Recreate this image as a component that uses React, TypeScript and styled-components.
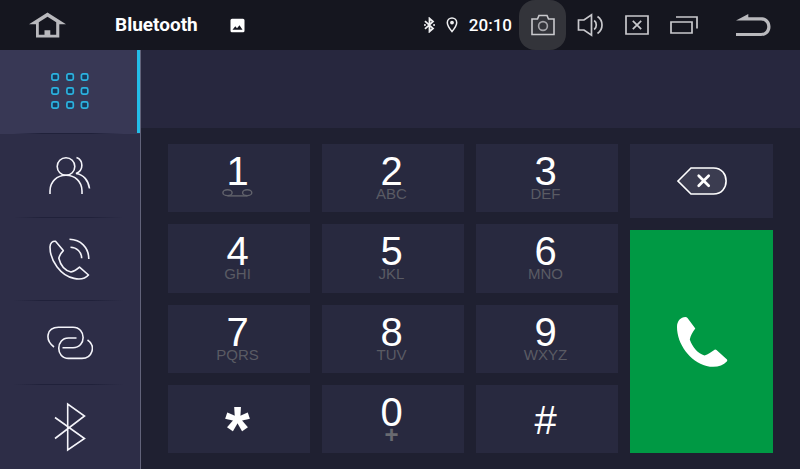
import React from "react";
import styled, { createGlobalStyle, css } from "styled-components";

const GlobalStyle = createGlobalStyle`
  * { box-sizing: border-box; }
  body { margin: 0; background: #1f2031; font-family: "Liberation Sans", Arial, sans-serif; color: #fff; }
  button { margin: 0; padding: 0; border: 0; background: none; color: inherit; font: inherit; cursor: pointer; }
  svg { display: block; flex: none; }
`;

const Screen = styled.div`
  display: flex;
  flex-direction: column;
  min-height: 100vh;
`;

const StatusBar = styled.header`
  display: flex;
  align-items: center;
  height: 50px;
  padding: 0 23px 0 24px;
  background: #15161f;
  font-family: Roboto, sans-serif;
`;

const BarButton = styled.button<{ $active?: boolean }>`
  display: flex;
  align-items: center;
  justify-content: center;
  width: 47px;
  height: 50px;
  border-radius: 16px;
  background: ${(p) => (p.$active ? "#33343a" : "transparent")};
`;

const Title = styled.h1`
  margin: 0 32px 0 44px;
  font-size: 19px;
  line-height: 24px;
  font-weight: 700;
`;

const Status = styled.div`
  display: flex;
  align-items: center;
  gap: 11px;
  margin-left: auto;
  margin-right: 7px;
`;

const Clock = styled.time`
  font-size: 17px;
  line-height: 24px;
  font-weight: 500;
`;

const NavButtons = styled.nav`
  display: flex;
  margin-right: 23px;
`;

const Body = styled.div`
  display: flex;
  flex: 1;
`;

const Sidebar = styled.nav`
  display: grid;
  grid-template-rows: repeat(5, minmax(80px, 1fr));
  width: 141px;
  background: #2d2d47;
  border-right: 1px solid #62637a;
`;

const Tab = styled.button<{ $active?: boolean }>`
  display: flex;
  align-items: center;
  justify-content: center;
  border-bottom: 1px solid transparent;
  border-image: linear-gradient(90deg, transparent 10%, #20213a 30%, #20213a 65%, transparent 88%) 1;
  &:last-child { border-image: none; }
  ${(p) =>
    p.$active &&
    css`
      background: #383855;
      box-shadow: inset -3px 0 #23bde8;
    `}
`;

const Main = styled.main`
  display: flex;
  flex: 1;
  flex-direction: column;
`;

const NumberField = styled.input`
  width: 100%;
  height: 78px;
  padding: 0 27px;
  border: 0;
  outline: 0;
  background: #27273e;
  color: #fff;
  font: 36px "Liberation Sans", Arial, sans-serif;
`;

const Dialer = styled.div`
  display: grid;
  flex: 1;
  grid-template-columns: 450fr 143fr;
  gap: 12px;
  padding: 16px 27px;
`;

const Keypad = styled.div`
  display: grid;
  grid-template-columns: repeat(3, 1fr);
  grid-template-rows: repeat(4, minmax(64px, 1fr));
  gap: 12px;
`;

const Key = styled.button`
  display: flex;
  flex-direction: column;
  align-items: center;
  padding: 11px 3px 0 0;
  background: #28293f;
`;

const Digit = styled.span`
  font-size: 40px;
  line-height: 32px;
`;

const Letters = styled.span<{ $plus?: boolean }>`
  display: flex;
  align-items: center;
  height: 14px;
  font-size: ${(p) => (p.$plus ? 24 : 15)}px;
  font-weight: ${(p) => (p.$plus ? 700 : 400)};
  line-height: 14px;
  color: ${(p) => (p.$plus ? "#696a70" : "#5a5b64")};
`;

const Sign = styled.span<{ $star?: boolean }>`
  height: 48px;
  font-size: ${(p) => (p.$star ? 64 : 40)}px;
  font-weight: ${(p) => (p.$star ? 700 : 400)};
  line-height: ${(p) => (p.$star ? 68 : 48)}px;
`;

const Actions = styled.div`
  display: flex;
  flex-direction: column;
  gap: 12px;
`;

const Action = styled.button<{ $call?: boolean }>`
  display: flex;
  align-items: center;
  justify-content: center;
  flex: ${(p) => (p.$call ? "1" : "0 0 74px")};
  background: ${(p) => (p.$call ? "#009944" : "#28293f")};
`;

const keys = [
  ["1", "voicemail"], ["2", "ABC"], ["3", "DEF"],
  ["4", "GHI"], ["5", "JKL"], ["6", "MNO"],
  ["7", "PQRS"], ["8", "TUV"], ["9", "WXYZ"],
  ["*", ""], ["0", "+"], ["#", ""],
];

const Voicemail = () => (
  <svg width="31" height="10" viewBox="0 0 31 10" fill="none" stroke="#62636c" strokeWidth="1.4">
    <ellipse cx="5.5" cy="3.7" rx="4.6" ry="2.9" />
    <ellipse cx="25.2" cy="3.7" rx="4.6" ry="2.9" />
    <path d="M5.5 6.9h20" />
  </svg>
);

const line = { fill: "none", stroke: "#f4f4fa", strokeWidth: 1.6 };

const tabs = [
  {
    name: "Keypad",
    icon: (
      <svg width="38" height="36" viewBox="0 0 38 36" fill="#173a5c" stroke="#2cb2df" strokeWidth="1.7">
        {[0.9, 14.9, 28.9].map((y) =>
          [0.9, 15.9, 30.4].map((x) => <rect key={`${x}-${y}`} x={x} y={y} width="6.4" height="6.2" rx="1.6" />),
        )}
      </svg>
    ),
  },
  {
    name: "Contacts",
    icon: (
      <svg width="42" height="39" viewBox="0 0 42 39" {...line}>
        <circle cx="17" cy="10.5" r="8.8" />
        <path d="M1 38v-3C1 25.500 8 19.300 17 19.300S33 25.500 33 35v3M27.500 1.500C34.500 4 35 14.500 27 17.500 34.500 18.500 39.500 24.500 40.500 32.500" />
      </svg>
    ),
  },
  {
    name: "Call history",
    icon: (
      <svg width="42" height="42" viewBox="0 0 42 42" {...line}>
        <path strokeLinejoin="round" d="M1 9C1 5 3.500 3 6.500 3.300L14.300 12.600C12 15 10.500 17.500 9.800 20.200 11.500 27 16 32.500 22 34 25 33.500 27.800 31.500 30.500 29.200L39.500 37C36.500 40.500 31 41.600 25 40.400 12 38 1 23 1 9Z" />
        <path d="M20.500 1.300C31.500 1.500 39.700 9.500 39.800 21M21.500 9.300C28 9.500 32.500 14 32.700 20.200" />
      </svg>
    ),
  },
  {
    name: "Pair device",
    icon: (
      <svg width="46" height="34" viewBox="0 0 46 34" {...line}>
        <path d="M7 21C-2.500 14-.5 1.300 11.500 1.300H26C39.500 1.300 39.500 21.700 26 21.700H15.500" />
        <path d="M29.500 12H21.500C8.500 12 8.500 32.400 21.500 32.400H35C45 32.400 49.500 20 40.500 14" />
      </svg>
    ),
  },
  {
    name: "Bluetooth settings",
    icon: (
      <svg width="32" height="50" viewBox="0 0 32 50" {...line}>
        <path d="M1 15.500 30.500 36.500 13.700 48V2L30.500 14 1 36.500" />
      </svg>
    ),
  },
];

export default function App() {
  return (
    <Screen>
      <GlobalStyle />
      <StatusBar>
        <BarButton aria-label="Home">
          <svg width="37" height="26" viewBox="0 0 37 26" fill="#b9b9bd">
            <path fillRule="evenodd" d="M18.500.5 37 12.200H30.300V25.500H7V12.200H0ZM18.500 4.700 9.800 10.200V22.800H15.500V18.300H21.300V22.800H27.200V10.200Z" />
          </svg>
        </BarButton>
        <Title>Bluetooth</Title>
        <svg width="15" height="15" viewBox="0 0 15 15" fill="#fff" aria-hidden="true">
          <path fillRule="evenodd" d="M2 .7H13Q14.500.7 14.500 2.200V12.800Q14.500 14.300 13 14.300H2Q.5 14.300.5 12.800V2.200Q.5.7 2 .7ZM2.500 11.800H12.500L9.500 7.300 7 10.200 5.300 8.200Z" />
        </svg>
        <Status>
          <svg width="11" height="16" viewBox="0 0 11 16" fill="none" stroke="#f0f0f2" strokeWidth="1.800" aria-hidden="true">
            <path d="M1 4.200 9 11.400 5.500 14.500V1.500L9 4.600 1 11.800" />
            <path d="M.2 8h1.500M9.300 8h1.500" />
          </svg>
          <svg width="12" height="16" viewBox="0 0 12 16" fill="none" stroke="#f0f0f2" strokeWidth="1.500" aria-hidden="true">
            <path d="M6 14.500C3.500 11.500 1.300 8.500 1.300 5.700A4.700 4.700 0 0 1 10.700 5.700C10.700 8.500 8.500 11.500 6 14.500Z" />
            <circle cx="6" cy="5.600" r="1.900" fill="#f0f0f2" stroke="none" />
          </svg>
          <Clock>20:10</Clock>
        </Status>
        <NavButtons>
          <BarButton $active aria-label="Screenshot">
            <svg width="24" height="22" viewBox="0 0 24 22" fill="none" stroke="#c9c9cd" strokeWidth="1.600">
              <path d="M1 5H6.500L8 1.500H16L17.500 5H23V20.500H1Z" />
              <circle cx="12" cy="12" r="4.400" stroke="#a5a5aa" />
            </svg>
          </BarButton>
          <BarButton aria-label="Volume">
            <svg width="26" height="24" viewBox="0 0 26 24" fill="none" stroke="#c9c9cd" strokeWidth="1.700">
              <path d="M1.500 7H7L14.500 1.800V22.200L7 17H1.500Z" />
              <path d="M17.200 7.500C20 9.500 20 14.500 17.200 16.500M20.500 3.500C26.500 7.500 26.500 16.500 20.500 20.500" />
            </svg>
          </BarButton>
          <BarButton aria-label="Close app">
            <svg width="24" height="20" viewBox="0 0 24 20" fill="none" stroke="#c9c9cd" strokeWidth="1.700">
              <path d="M1 1H23V19H1ZM7.800 5.800 16.200 14.200M16.200 5.800 7.800 14.200" />
            </svg>
          </BarButton>
          <BarButton aria-label="Recent apps">
            <svg width="28" height="20" viewBox="0 0 28 20" fill="none" stroke="#c9c9cd" strokeWidth="1.700">
              <path d="M1 7H22V18H1ZM6 2H27V13.500" />
            </svg>
          </BarButton>
        </NavButtons>
        <BarButton aria-label="Back">
          <svg width="35" height="24" viewBox="0 0 35 24" fill="#b9b9bd">
            <path d="M0 7.500 12.300 1V4.300H25C37.700 4.300 37.700 23 25 23H0V20H25C33.300 20 33.300 7.500 25 7.500Z" />
          </svg>
        </BarButton>
      </StatusBar>
      <Body>
        <Sidebar aria-label="Phone sections">
          {tabs.map((tab, i) => (
            <Tab key={tab.name} $active={i === 0} aria-label={tab.name}>
              {tab.icon}
            </Tab>
          ))}
        </Sidebar>
        <Main>
          <NumberField type="tel" aria-label="Phone number" />
          <Dialer>
            <Keypad>
              {keys.map(([digit, letters]) => (
                <Key key={digit}>
                  {letters ? (
                    <>
                      <Digit>{digit}</Digit>
                      <Letters $plus={letters === "+"}>{letters === "voicemail" ? <Voicemail /> : letters}</Letters>
                    </>
                  ) : (
                    <Sign $star={digit === "*"}>{digit}</Sign>
                  )}
                </Key>
              ))}
            </Keypad>
            <Actions>
              <Action aria-label="Delete digit">
                <svg width="50" height="28" viewBox="0 0 50 28" fill="#3b3c50" stroke="#fff" strokeWidth="1.600">
                  <path d="M1 14 14 1H36.500C53.300 1 53.300 27 36.500 27H14Z" />
                  <path d="M21.700 8.800 31.700 18.800M31.700 8.800 21.700 18.800" strokeWidth="2.700" strokeLinecap="round" />
                </svg>
              </Action>
              <Action $call aria-label="Call">
                <svg width="52" height="52" viewBox="0 0 52 52" fill="#fff">
                  <path d="M1 11C1 5 4.500 1.300 9.500 1Q10.500 1 11.500 2L19.300 12.500C16.500 16.500 14.500 19.500 13.800 23.500 16.500 31.500 22 37.500 28.500 39.500 32 38.500 35.500 36 39 33.500Q39.700 33.300 40.500 34L51 43.500Q51.700 44.500 50.800 45.500C46.500 50.500 38.500 52 30.500 50 14 45.500 1 28 1 11Z" />
                </svg>
              </Action>
            </Actions>
          </Dialer>
        </Main>
      </Body>
    </Screen>
  );
}
